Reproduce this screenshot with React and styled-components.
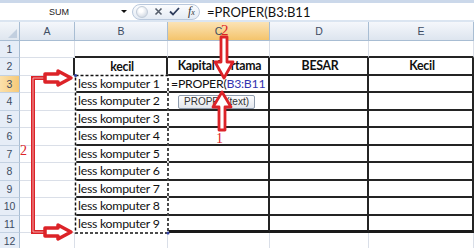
import styled, { createGlobalStyle } from 'styled-components';

const GlobalStyle = createGlobalStyle`
  body {
    margin: 0;
    background: #fff;
  }
`

const Sheet = styled.div`
  position: relative;
  width: 474px;
  height: 248px;
  overflow: hidden;
  background: #fff;
  font-family: Lato, "Liberation Sans", sans-serif;
`

const FormulaBar = styled.div`
  display: flex;
  align-items: center;
  height: 17px;
  border-top: 3px solid #cbd8ea;
  border-bottom: 2px solid #dbe5f1;
`

const NameBox = styled.div`
  width: 118px;
  text-align: center;
  font-family: "Liberation Sans", sans-serif;
  font-size: 9px;
  color: #222;
`

const DropArrow = styled.span`
  width: 0;
  height: 0;
  margin-left: 3px;
  border-left: 3px solid transparent;
  border-right: 3px solid transparent;
  border-top: 3px solid #111;
`

const Pill = styled.div`
  display: flex;
  align-items: center;
  gap: 6px;
  margin-left: 5px;
  width: 68px;
  height: 16px;
  box-sizing: border-box;
  padding-left: 3px;
  border: 1px solid #b9c8dc;
  border-radius: 9px;
  background: linear-gradient(#fbfcfe, #e4ebf4);
`

const Orb = styled.span`
  width: 10px;
  height: 10px;
  border-radius: 50%;
  background: radial-gradient(circle at 40% 35%, #fff 20%, #c9d2de 90%);
  border: 1px solid #c2ccd9;
`

const FxLabel = styled.span`
  font-family: "Liberation Serif", serif;
  font-style: italic;
  font-size: 12px;
  color: #333;
  margin-left: 2px;
  span {
    font-size: 8px;
  }
`

const FormulaText = styled.div`
  padding-left: 7px;
  font-size: 13px;
  color: #111;
  white-space: nowrap;
`

const Grid = styled.div`
  display: grid;
  grid-template-columns: 20px 55px 93px 102px 99px 105px;
  grid-template-rows: 18.5px repeat(12, 17.5px);
`

const Corner = styled.div`
  position: relative;
  background: linear-gradient(#f3f6fa, #dfe6ef);
  border-right: 1px solid #a8bdd3;
  border-bottom: 1px solid #a8bdd3;
  &::after {
    content: '';
    position: absolute;
    right: 2px;
    bottom: 2px;
    border-left: 9px solid transparent;
    border-bottom: 9px solid #c2cfdf;
  }
`

const ColHeader = styled.div`
  display: flex;
  align-items: center;
  justify-content: center;
  box-sizing: border-box;
  border-right: 1px solid #a8bdd3;
  border-bottom: 1px solid #a8bdd3;
  background: ${p => p.$active
    ? 'linear-gradient(#fbe3b6, #f4c46c)'
    : 'linear-gradient(#f5f7fb, #dde5ef)'};
  font-family: "Liberation Sans", sans-serif;
  font-size: 10.5px;
  color: #3d4c62;
`

const RowHeader = styled.div`
  display: flex;
  align-items: center;
  justify-content: center;
  box-sizing: border-box;
  border-right: 1px solid #a8bdd3;
  border-bottom: 1px solid #c3d1e2;
  background: ${p => p.$active ? 'linear-gradient(90deg, #fbe0ab, #f6c978)' : '#e6edf7'};
  font-family: "Liberation Sans", sans-serif;
  font-size: 10.5px;
  color: #3d4c62;
`

const borders = {
  grid: '1px solid #dadfe8',
  thick: '2px solid #242424',
  heavy: '3px solid #1a1a1a',
  none: '1px solid transparent',
}

const Cell = styled.div`
  display: flex;
  align-items: center;
  justify-content: ${p => p.$center ? 'center' : 'flex-start'};
  box-sizing: border-box;
  padding-left: 3px;
  border-right: ${p => borders[p.$right || 'grid']};
  border-bottom: ${p => borders[p.$bottom || 'grid']};
  font-size: 12.3px;
  letter-spacing: -0.25px;
  font-weight: ${p => p.$bold ? 700 : 400};
  color: #111;
  white-space: nowrap;
  overflow: visible;
`

const RangeRef = styled.span`
  color: #3434b0;
`

const Overlay = styled.svg`
  position: absolute;
  left: 0;
  top: 0;
  pointer-events: none;
`

const Tooltip = styled.div`
  position: absolute;
  left: 178px;
  top: 95px;
  padding: 0 5px;
  height: 12px;
  line-height: 12px;
  border: 1px solid #8f9cad;
  border-radius: 2px;
  background: linear-gradient(#fdfdfe, #e3e7ed);
  font-family: "Liberation Sans", sans-serif;
  font-size: 10px;
  color: #333;
`

const columns = ['A', 'B', 'C', 'D', 'E']
const names = Array.from({ length: 9 }, (_, i) => `less komputer ${i + 1}`)

const cellsFor = row => {
  if (row === 1) {
    return [{}, { bottom: 'thick' }, { bottom: 'thick' }, { bottom: 'thick' }, { bottom: 'thick' }]
  }
  if (row === 2) {
    return [
      { right: 'thick' },
      { right: 'thick', bottom: 'none', center: true, bold: true, text: 'kecil' },
      { right: 'thick', bottom: 'thick', center: true, bold: true, text: 'Kapital Pertama' },
      { right: 'thick', bottom: 'thick', center: true, bold: true, text: 'BESAR' },
      { right: 'thick', bottom: 'thick', center: true, bold: true, text: 'Kecil' },
    ]
  }
  if (row <= 11) {
    const last = row === 11
    const edge = last ? 'heavy' : 'thick'
    return [
      { right: 'none' },
      { right: 'none', bottom: last ? 'none' : 'thick', text: names[row - 3] },
      {
        right: 'thick',
        bottom: edge,
        text: row === 3 ? <>=PROPER(<RangeRef>B3:B11</RangeRef></> : null,
      },
      { right: 'thick', bottom: edge },
      { right: 'thick', bottom: edge },
    ]
  }
  return [{}, {}, {}, {}, {}]
}

const red = '#dc2328'

const Arrows = () => (
  <Overlay width="474" height="248">
    <rect x="75.5" y="75.5" width="92.5" height="157.5" fill="none" stroke="#fff" strokeWidth="1.5" />
    <rect x="75.5" y="75.5" width="92.5" height="157.5" fill="none" stroke="#111" strokeWidth="1.5" strokeDasharray="3 2" />
    <circle cx="75.5" cy="75.5" r="1.5" fill="#3040a0" />
    <circle cx="168" cy="233" r="1.5" fill="#3040a0" />

    <text x="221" y="35" fill={red} fontFamily="Liberation Serif, serif" fontSize="15">2</text>
    <polygon points="221,37 227,37 227,62 233,62 224,78 215,62 221,62" fill="#fff" stroke={red} strokeWidth="2.8" strokeLinejoin="round" />

    <polygon points="219,130 225,130 225,107 231,107 222,92 213,107 219,107" fill="#fff" stroke={red} strokeWidth="2.8" strokeLinejoin="round" />
    <text x="216" y="143" fill={red} fontFamily="Liberation Serif, serif" fontSize="14">1</text>

    <path d="M46 78 H33 V232 H46" fill="none" stroke={red} strokeWidth="4" />
    <path d="M46 78 H33 V232 H46" fill="none" stroke="#f6c6c6" strokeWidth="0.8" />
    <polygon points="45,74 58,74 58,71 71,78 58,85 58,82 45,82" fill="#fff" stroke={red} strokeWidth="3.5" strokeLinejoin="round" />
    <polygon points="45,228 58,228 58,225 71,232 58,239 58,236 45,236" fill="#fff" stroke={red} strokeWidth="3.5" strokeLinejoin="round" />
    <text x="20" y="155" fill={red} fontFamily="Liberation Serif, serif" fontSize="14">2</text>
  </Overlay>
)

const App = () => (
  <Sheet>
    <GlobalStyle />
    <FormulaBar>
      <NameBox>SUM</NameBox>
      <DropArrow />
      <Pill>
        <Orb />
        <svg width="9" height="9" viewBox="0 0 9 9">
          <path d="M1.5 1.5 L7.5 7.5 M7.5 1.5 L1.5 7.5" stroke="#555e6b" strokeWidth="1.6" />
        </svg>
        <svg width="11" height="9" viewBox="0 0 11 9">
          <path d="M1 4.5 L4 7.5 L10 1" fill="none" stroke="#2d3c5c" strokeWidth="1.8" />
        </svg>
        <FxLabel>f<span>x</span></FxLabel>
      </Pill>
      <FormulaText>=PROPER(B3:B11</FormulaText>
    </FormulaBar>
    <Grid>
      <Corner />
      {columns.map(c => (
        <ColHeader key={c} $active={c === 'C'}>{c}</ColHeader>
      ))}
      {Array.from({ length: 12 }, (_, i) => i + 1).map(row => [
        <RowHeader key={`h${row}`} $active={row === 3}>{row}</RowHeader>,
        ...cellsFor(row).map((c, j) => (
          <Cell
            key={`${row}-${j}`}
            $right={c.right}
            $bottom={c.bottom}
            $center={c.center}
            $bold={c.bold}
          >
            {c.text}
          </Cell>
        )),
      ])}
    </Grid>
    <Tooltip>PROPER(text)</Tooltip>
    <Arrows />
  </Sheet>
)

export default App;
